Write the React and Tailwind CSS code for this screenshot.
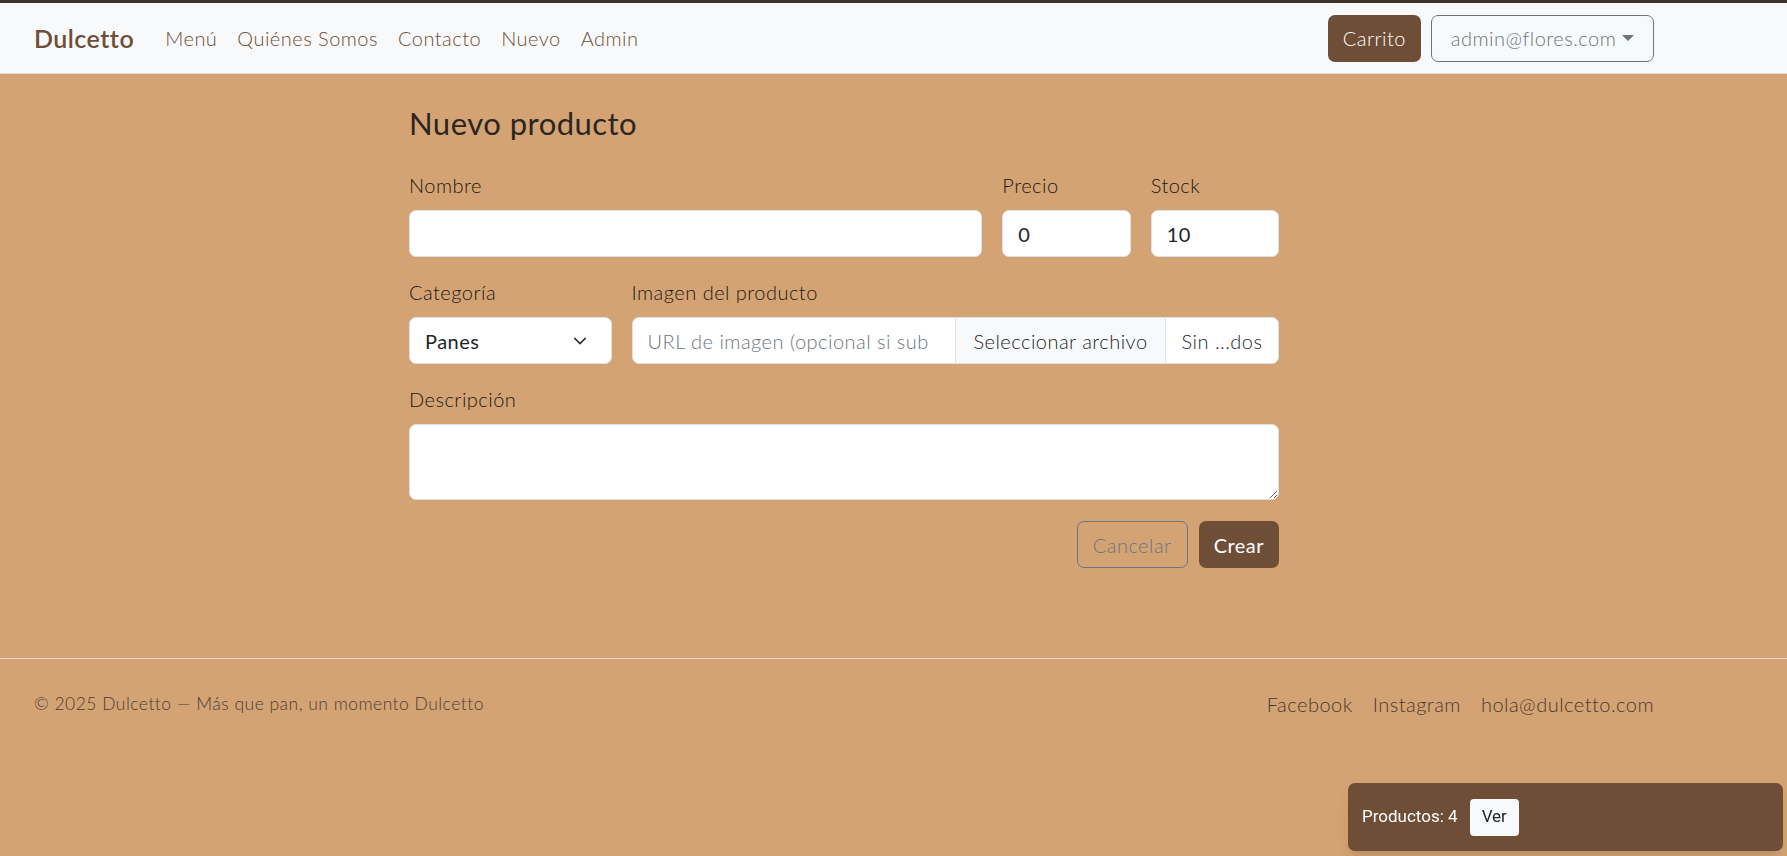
import React from 'react';

const links = ['Menú', 'Quiénes Somos', 'Contacto', 'Nuevo', 'Admin'];

function Label({ children }) {
  return <label className="block mb-[10px] leading-[30px] text-[20px] font-light text-[#1c1815]">{children}</label>;
}

export default function App() {
  return (
    <div className="min-h-screen bg-[#d4a373] flex flex-col font-['Lato','Noto_Sans',sans-serif] tracking-[0.03em]">
      {/* Navbar */}
      <nav className="border-t-[3px] border-t-[#3f302a] border-b border-b-[#dcdcdc] bg-[#f8f9fa] h-[74px] flex items-center pl-[34px] pr-[133px]">
        <a className="text-[25px] font-semibold text-[#6f4e37] mr-[21px] leading-[30px]">Dulcetto</a>
        <ul className="flex items-center">
          {links.map(l => (
            <li key={l} className="px-[10px] text-[20px] leading-[30px] font-light text-[#6f4e37]">{l}</li>
          ))}
        </ul>
        <div className="ml-auto flex items-center gap-[10px]">
          <button className="h-[47px] px-[15px] rounded-[7px] bg-[#6f4e37] text-white text-[20px] font-light">Carrito</button>
          <button className="h-[47px] w-[223px] px-[15px] rounded-[7px] border border-[#6c757d] text-[#6c757d] text-[20px] font-light flex items-center justify-center gap-[6px]">
            admin@flores.com
            <svg width="12" height="8" viewBox="0 0 12 8"><path d="M0 1h12L6 7z" fill="#6c757d" /></svg>
          </button>
        </div>
      </nav>

      {/* Form */}
      <main className="w-[870px] ml-[409px] pt-[28px] pb-[30px]">
        <h3 className="text-[31px] leading-[42px] text-[#2b2622] mb-[26px]">Nuevo producto</h3>
        <div className="grid grid-cols-12 gap-x-5 gap-y-5">
          <div className="col-span-8">
            <Label>Nombre</Label>
            <div className="h-[47px] bg-white border border-[#dee2e6] rounded-[7px]" />
          </div>
          <div className="col-span-2">
            <Label>Precio</Label>
            <div className="h-[47px] bg-white border border-[#dee2e6] rounded-[7px] px-[15px] flex items-center text-[20px] text-[#212529]">0</div>
          </div>
          <div className="col-span-2">
            <Label>Stock</Label>
            <div className="h-[47px] bg-white border border-[#dee2e6] rounded-[7px] px-[15px] flex items-center text-[20px] text-[#212529]">10</div>
          </div>

          <div className="col-span-3">
            <Label>Categoría</Label>
            <div className="h-[47px] bg-white border border-[#dee2e6] rounded-[7px] pl-[15px] pr-[22px] flex items-center justify-between text-[20px] text-[#212529]">
              Panes
              <svg width="18" height="14" viewBox="0 0 16 16" fill="none" stroke="#343a40" strokeWidth="2" strokeLinecap="round" strokeLinejoin="round"><path d="m2 5 6 6 6-6" /></svg>
            </div>
          </div>
          <div className="col-span-9">
            <Label>Imagen del producto</Label>
            <div className="h-[47px] bg-white border border-[#dee2e6] rounded-[7px] flex items-stretch text-[20px] overflow-hidden">
              <div className="flex-1 min-w-0 px-[15px] flex items-center text-[#6c757d] font-light whitespace-nowrap overflow-hidden">URL de imagen (opcional si sub</div>
              <div className="w-[211px] bg-[#f8f9fa] border-l border-r border-[#dee2e6] flex items-center justify-center text-[#212529] font-light whitespace-nowrap">Seleccionar archivo</div>
              <div className="w-[112px] flex items-center justify-center text-[#212529] font-light">Sin ...dos</div>
            </div>
          </div>

          <div className="col-span-12">
            <Label>Descripción</Label>
            <textarea rows={2} className="block w-full h-[76px] bg-white border border-[#dee2e6] rounded-[7px] outline-none" />
          </div>
        </div>
        <div className="flex justify-end gap-[11px] mt-[21px]">
          <button className="h-[47px] px-[15px] rounded-[7px] border border-[#6c757d] text-[#6c757d] text-[20px] font-light">Cancelar</button>
          <button className="h-[47px] px-[15px] rounded-[7px] bg-[#6f4e37] text-white text-[20px]">Crear</button>
        </div>
      </main>

      {/* Footer */}
      <footer className="mt-[60px] border-t border-[#e3d9cf] py-[30px] pl-[34px] pr-[133px] flex items-center justify-between">
        <span className="text-[17.5px] leading-[30px] font-light text-[#4a3d34]">© 2025 Dulcetto — Más que pan, un momento Dulcetto</span>
        <div className="flex gap-[20px] text-[20px] leading-[30px] font-light text-[#4a3a2f]">
          <a>Facebook</a>
          <a>Instagram</a>
          <a>hola@dulcetto.com</a>
        </div>
      </footer>

      {/* Cart toast */}
      <div className="fixed right-[4px] bottom-[5px] w-[435px] h-[68px] bg-[#6f4e37] rounded-[7px] shadow-lg flex items-center px-[14px] gap-[12px] font-['Roboto',sans-serif] tracking-normal">
        <span className="text-white text-[17px]">Productos: 4</span>
        <button className="h-[37px] px-[12px] bg-[#f8f9fa] rounded-[4px] text-[17px] text-[#212529]">Ver</button>
      </div>
    </div>
  );
}
